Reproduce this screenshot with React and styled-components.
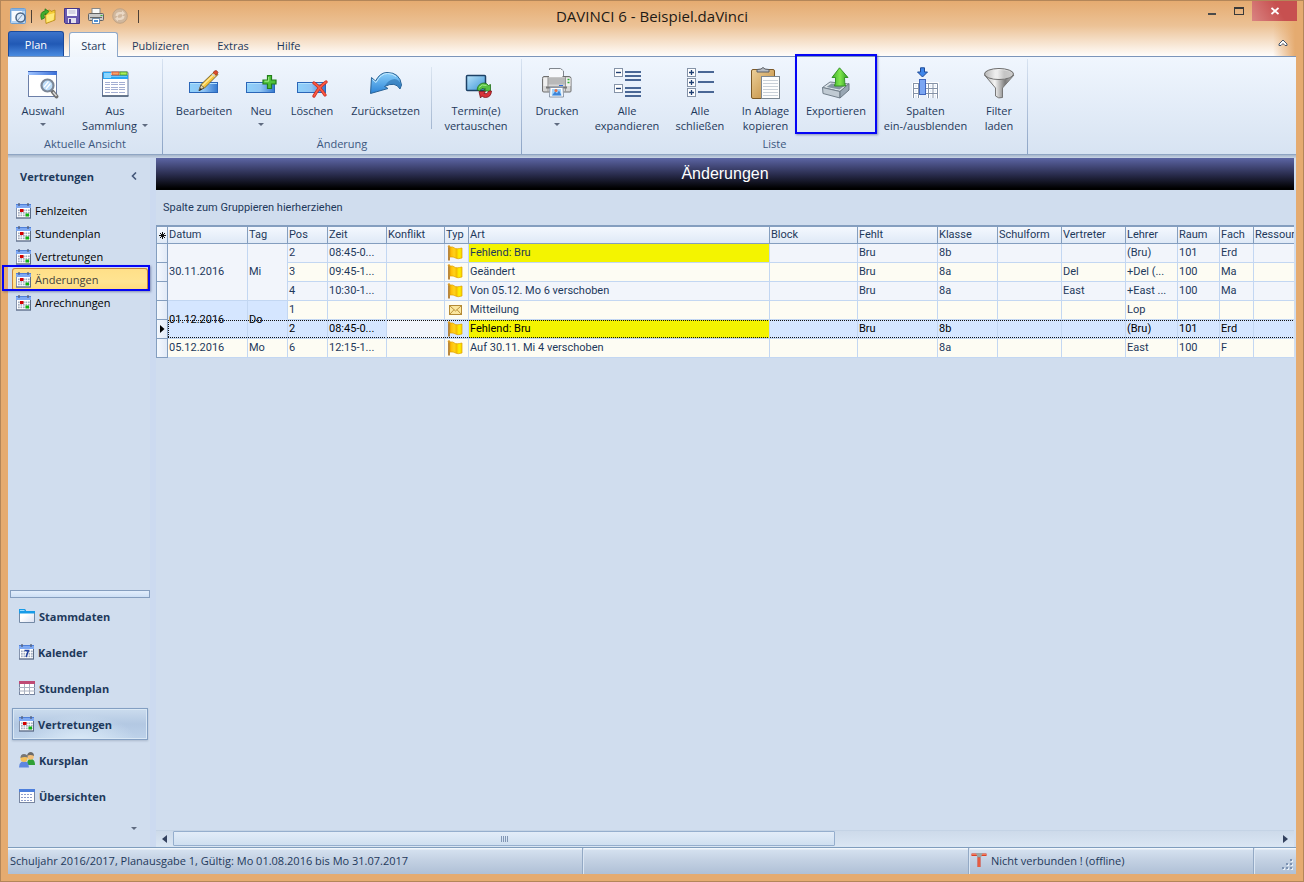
import React from "react";
import styled, { createGlobalStyle, css } from "styled-components";

const ui = `"Open Sans", "Noto Sans", sans-serif`;
const grid = `Roboto, "Noto Sans", sans-serif`;

const GlobalStyle = createGlobalStyle`
  *, *::before, *::after { box-sizing: border-box; }
  body { margin: 0; font: 11px/15px ${ui}; color: #1e395b; }
  button { font: inherit; color: inherit; border: 0; background: none; padding: 0; cursor: default; }
  svg { display: block; flex: none; }
`;

/* ---------- window frame ---------- */

const Frame = styled.div`
  min-height: 100vh;
  display: flex;
  flex-direction: column;
  background: #e5ab70;
  border: 1px solid #b38659;
  padding: 0 7px 7px;
`;

const Caption = styled.header`
  margin: 0 -7px;
  padding: 0 7px;
  background:
    linear-gradient(to right, #e5ab70 7px, rgba(229, 171, 112, 0) 30px),
    linear-gradient(to left, #e5ab70 8px, rgba(229, 171, 112, 0) 30px),
    linear-gradient(#e5ab70, #ecc296 45%, #fffdfb);
`;

const TitleBar = styled.div`
  display: grid;
  grid-template-columns: 1fr auto 1fr;
  height: 30px;
`;

const QuickAccess = styled.div`
  display: flex;
  align-items: center;
  gap: 8px;
  padding-left: 2px;
`;

const QuickButton = styled.button`
  width: 16px;
  height: 16px;
`;

const QuickBar = styled.span`
  width: 1px;
  height: 13px;
  margin-left: ${(p) => (p.$last ? "2px" : "-3px")};
  background: #4c4036;
`;

const WindowTitle = styled.h1`
  margin: 0;
  font-size: 15px;
  line-height: 30px;
  font-weight: 400;
  color: #1f1a15;
`;

const WindowButtons = styled.div`
  display: flex;
  justify-content: flex-end;
  margin-right: -1px;
`;

const WindowButton = styled.button`
  width: ${(p) => (p.$close ? 45 : 27)}px;
  height: 20px;
  display: grid;
  place-items: center;
  background: ${(p) => (p.$close ? "linear-gradient(60deg, #d98482, #c75050 60%)" : "none")};
`;

const TabStrip = styled.nav`
  display: flex;
  height: 25px;
  align-items: flex-end;
`;

const Tab = styled.button`
  height: 25px;
  padding: 4px 14px 0;
  ${(p) => p.$kind === "plan" && css`
    width: 56px;
    padding: 0;
    margin-right: 5px;
    color: #fff;
    border: 1px solid #1c4a9c;
    border-bottom: 0;
    border-radius: 3px 3px 0 0;
    background: linear-gradient(#3d74cb, #2159b5 50%, #4a8be0);
  `}
  ${(p) => p.$kind === "active" && css`
    width: 49px;
    padding: 1px 0 0;
    margin-bottom: -1px;
    position: relative;
    border: 1px solid #8ea9cb;
    border-bottom: 0;
    border-radius: 3px 3px 0 0;
    background: linear-gradient(#fbfdff, #eff5fc);
  `}
`;

const CollapseRibbon = styled.button`
  margin: 0 8px 9px auto;
`;

/* ---------- ribbon ---------- */

const Ribbon = styled.section`
  display: flex;
  min-height: 99px;
  border-top: 1px solid #7b95ba;
  border-bottom: 1px solid #8fa5c3;
  background: linear-gradient(#f0f6fe, #d7e3f2);
`;

const RibbonShade = styled.div`
  height: 3px;
  background: linear-gradient(#a6b6ca, #c8d5e6);
`;

const Group = styled.div`
  display: flex;
  flex-direction: column;
  margin-top: 2px;
  border-right: 1px solid;
  border-image: linear-gradient(#d9e4f2, #8aa2c4) 1;
`;

const GroupButtons = styled.div`
  display: flex;
  flex: 1;
  padding: ${(p) => p.$pad};
`;

const GroupLabel = styled.div`
  text-align: center;
  padding-bottom: 3px;
  color: #3b5780;
`;

const Divider = styled.span`
  width: 1px;
  height: 62px;
  margin: 8px 4px 0 0;
  background: linear-gradient(#dbe5f1, #a3b6d0);
`;

const RibbonButton = styled.button`
  position: relative;
  display: flex;
  flex-direction: column;
  align-items: center;
  width: ${(p) => p.$w}px;
  padding-top: 8px;
  white-space: nowrap;
  svg:first-child { margin-bottom: 4px; }
`;

const Caret = styled.i`
  display: inline-block;
  margin: ${(p) => (p.$inline ? "0 0 3px 5px" : "5px 0 0")};
  border: 3px solid transparent;
  border-top-color: #5f6b80;
  border-bottom: 0;
`;

const Marker = styled.span`
  position: absolute;
  inset: ${(p) => p.$inset};
  z-index: 3;
  border: 2px solid #0505f5;
  box-shadow: 1px 1px 2px rgba(60, 70, 120, 0.5);
  pointer-events: none;
`;

/* ---------- work area ---------- */

const Main = styled.main`
  flex: 1;
  display: flex;
  background: #d0ddee;
`;

const Sidebar = styled.aside`
  width: 142px;
  display: flex;
  flex-direction: column;
  flex: none;
`;

const Splitter = styled.div`
  width: 6px;
  background: #ccdaf0;
`;

const SideHead = styled.div`
  display: flex;
  align-items: center;
  justify-content: space-between;
  height: 36px;
  padding: 0 13px 0 12px;
  margin-bottom: 5px;
  font-weight: 700;
`;

const ViewList = styled.div`
  flex: 1;
  display: flex;
  flex-direction: column;
`;

const ViewItem = styled.button`
  position: relative;
  display: flex;
  align-items: center;
  gap: 4px;
  height: 23px;
  margin: 0 2px 0 4px;
  padding-left: 4px;
  color: #000;
  ${(p) => p.$active && css`
    color: #46433c;
    border-radius: 3px;
    background: linear-gradient(#ffdf87, #ffe492 60%, #ffd978);
    box-shadow: inset 0 0 0 1px #c8853c;
  `}
`;

const Grip = styled.div`
  height: 8px;
  margin: 0 0 2px 2px;
  border: 1px solid #859ebf;
  background: linear-gradient(#e3eefc, #cddff5);
`;

const NavItem = styled.button`
  display: flex;
  align-items: center;
  gap: 4px;
  height: 32px;
  margin: 0 2px 4px 4px;
  padding-left: 6px;
  border: 1px solid transparent;
  font-weight: 700;
  ${(p) => p.$active && css`
    border-color: #839fc2;
    background: radial-gradient(ellipse at 50% 110%, #dcebf8, rgba(220, 235, 248, 0) 60%),
      linear-gradient(#cbdcee, #b3c8e2 50%, #bdd2ea);
    box-shadow: inset 0 0 0 1px #dae8f5, 0 1px 2px #aab9cc;
  `}
`;

const MoreRow = styled.button`
  height: 31px;
  margin-right: 13px;
  padding-bottom: 12px;
  display: flex;
  align-items: center;
  justify-content: flex-end;
`;

const Content = styled.section`
  flex: 1;
  min-width: 0;
  display: flex;
  flex-direction: column;
  padding-right: 2px;
`;

const Banner = styled.h2`
  margin: 0;
  height: 32px;
  font: 400 16px/31px "Liberation Sans", Arial, sans-serif;
  text-align: center;
  color: #fff;
  background: linear-gradient(#5c65a4, #2b2e50 50%, #000 95%);
`;

const GroupHint = styled.div`
  padding: 0 7px;
  font-family: ${grid};
  line-height: 35px;
`;

const GridWrap = styled.div`
  flex: 1;
  overflow: hidden;
`;

const Grid = styled.table`
  width: 100%;
  table-layout: fixed;
  border-collapse: separate;
  border-spacing: 0;
  font-family: ${grid};
`;

const HeadCell = styled.th`
  height: 19px;
  padding: 0 0 0 1px;
  overflow: hidden;
  white-space: nowrap;
  text-align: left;
  font-weight: 400;
  line-height: 16px;
  border: solid #849ebf;
  border-width: 2px 1px 1px ${(p) => (p.$first ? "1px" : "0")};
  background: linear-gradient(#f4f8fe, #dfe9f6);
  &:last-child { border-right: 0; }
`;

const RowHead = styled.th`
  height: 19px;
  padding: 0 0 0 3px;
  border: solid #849ebf;
  border-width: 0 1px 1px;
  background: linear-gradient(to right, #f4f8fe, #e1eaf7);
`;

const dotsX = "repeating-linear-gradient(to right, #111 0 1px, transparent 1px 2px)";

const Cell = styled.td`
  position: relative;
  height: 19px;
  padding: 0 0 0 1px;
  overflow: hidden;
  white-space: nowrap;
  line-height: 18px;
  border: solid #c3d7f2;
  border-width: 0 1px 1px 0;
  color: ${(p) => (p.$focus ? "#000" : "inherit")};
  background: ${(p) => p.$bg};
  &:last-child { border-right: 0; }
  ${(p) => p.$focus && css`
    &::after {
      content: "";
      position: absolute;
      inset: ${p.$span ? "19px" : "0"} 0 0 0;
      background: ${dotsX} top / 100% 1px no-repeat, ${dotsX} bottom / 100% 1px no-repeat
        ${p.$start ? ", repeating-linear-gradient(#111 0 1px, transparent 1px 2px) left / 1px 100% no-repeat" : ""};
    }
  `}
`;

const ScrollBar = styled.div`
  display: flex;
  height: 17px;
  border-top: 1px solid #c4d3e5;
  background: linear-gradient(#cddaea, #dae6f3);
`;

const ScrollArrow = styled.button`
  width: 17px;
  display: grid;
  place-items: center;
`;

const ScrollTrack = styled.div`
  flex: 1;
  display: flex;
`;

const ScrollThumb = styled.div`
  width: 60%;
  display: flex;
  align-items: center;
  justify-content: center;
  gap: 1px;
  border: 1px solid #95aecd;
  border-radius: 1px;
  background: linear-gradient(#e2ecf8, #cfdff0);
  margin-bottom: 1px;
  i { width: 1px; height: 6px; background: #8296b4; }
`;

const StatusBar = styled.footer`
  display: grid;
  grid-template-columns: 575fr 386fr 285fr 42fr;
  height: 27px;
  border-top: 1px solid #7f9dbd;
  background: linear-gradient(#f2f7fc 1px, #d4e0ef 2px, #c2d0e2 50%, #afc0d6);
`;

const StatusCell = styled.div`
  display: flex;
  align-items: center;
  gap: 4px;
  padding: 0 0 2px 2px;
  white-space: nowrap;
  border-right: ${(p) => (p.$last ? "0" : "1px solid #93a9c5")};
  box-shadow: ${(p) => (p.$last ? "none" : "1px 0 #dbe6f3")};
  ${(p) => p.$last && css`align-items: flex-end; justify-content: flex-end; padding: 0 2px 3px 0;`}
`;

/* ---------- icons ---------- */

const Svg = ({ s = 32, w = s, h = s, children }) => (
  <svg width={w} height={h} viewBox={`0 0 ${w} ${h}`} aria-hidden="true">{children}</svg>
);

const HiddenDefs = styled.svg`
  position: absolute;
`;

const Defs = () => (
  <HiddenDefs width="0" height="0" aria-hidden="true">
    <defs>
      <linearGradient id="blueBar" x2="1"><stop stopColor="#8ed1fb" /><stop offset=".5" stopColor="#8fc4f4" /><stop offset="1" stopColor="#3579d0" /></linearGradient>
      <linearGradient id="blueArrow" y2="1" x2="0"><stop stopColor="#8bd0fb" /><stop offset="1" stopColor="#2c83d6" /></linearGradient>
      <linearGradient id="metal" x2="1"><stop stopColor="#b9b9b9" /><stop offset=".45" stopColor="#f7f7f7" /><stop offset="1" stopColor="#c9c9c9" /></linearGradient>
      <linearGradient id="metalDark" x2="1"><stop stopColor="#b5b5b5" /><stop offset=".35" stopColor="#f4f4f4" /><stop offset=".7" stopColor="#7c7c7c" /><stop offset="1" stopColor="#c4c4c4" /></linearGradient>
      <linearGradient id="green" x2="1"><stop stopColor="#3fae2c" /><stop offset=".5" stopColor="#7fe64d" /><stop offset="1" stopColor="#2f9a22" /></linearGradient>
      <linearGradient id="board" x2="1" y2="1"><stop stopColor="#ecd09a" /><stop offset="1" stopColor="#bf8635" /></linearGradient>
      <linearGradient id="flag" x2="1"><stop stopColor="#ffb400" /><stop offset=".35" stopColor="#ffd21a" /><stop offset=".55" stopColor="#f5bd00" /><stop offset=".75" stopColor="#fff200" /><stop offset="1" stopColor="#f6cf00" /></linearGradient>
      <linearGradient id="screen" x2="1" y2="1"><stop stopColor="#b9e3fa" /><stop offset="1" stopColor="#3a93d6" /></linearGradient>
      <linearGradient id="paper" x2="1" y2="1"><stop offset=".4" stopColor="#fff" /><stop offset="1" stopColor="#d9e0f2" /></linearGradient>
      <linearGradient id="head" x2="1"><stop stopColor="#9fc4ff" /><stop offset="1" stopColor="#3a6fd8" /></linearGradient>
    </defs>
  </HiddenDefs>
);

const WindowSearch = () => (
  <Svg>
    <rect x="1.500" y="4.500" width="28" height="25" fill="#fff" stroke="#6c7fa8" />
    <rect x="1" y="4" width="29" height="4" fill="url(#head)" />
    <rect x="1" y="4" width="29" height="1" fill="#3a62b8" />
    <path d="M25.500 24.500l4 5" stroke="#6f6f6f" strokeWidth="3.800" strokeLinecap="round" />
    <path d="M26 25l3.500 4" stroke="#ddd" strokeWidth="1.300" />
    <circle cx="20.500" cy="18.500" r="6" fill="#bcdcf8" stroke="#7c8797" strokeWidth="2.200" />
    <path d="M17 20l4.500-5.500M19 22l4.500-5.500" stroke="#fff" strokeWidth="1.200" />
  </Svg>
);

const TabbedList = () => (
  <Svg>
    <path d="M3.500 12V6q0-1 1-1H28q1 0 1 1v23H3.500z" fill="#fff" stroke="#65789c" />
    <path d="M4 12V5h8v3h17v4z" fill="#27a4f5" />
    <rect x="5" y="6" width="7" height="5" fill="#8cd6ff" />
    <path d="M12 9.500h16" stroke="#6cc6fb" />
    <rect x="13" y="5" width="7" height="3" fill="#f3a36a" stroke="#d94a2a" strokeWidth=".8" />
    <rect x="21" y="5" width="7" height="3" fill="#a9ef5e" stroke="#4d9a1c" strokeWidth=".8" />
    {[15, 17, 20, 22, 25].map((y) => <path key={y} d={`M6 ${y}.5h5m1 0h7m1 0h6`} stroke="#a3aed2" />)}
    <path d="M3 29h26.500" stroke="#4e6177" strokeWidth="1.500" />
  </Svg>
);

const Bar = () => (
  <>
    <rect x="1.500" y="15.500" width="28" height="10" fill="url(#blueBar)" stroke="#2b66b8" />
    <path d="M2 16.500h27" stroke="#b4e1fd" />
  </>
);

const EditIcon = () => (
  <Svg>
    <Bar />
    <path d="M11 23.500l2-6L26.500 4.500l3.500 3L16.500 21z" fill="#f4c63c" stroke="#6b5a2a" strokeWidth=".9" />
    <path d="M14 19L27 6.500" stroke="#ffe99a" strokeWidth="1.300" />
    <path d="M25 5.500l2-1.800q2-.8 3 1.800l-1.800 2.800z" fill="#e24a2c" stroke="#8e3222" strokeWidth=".7" />
    <path d="M24 7l3 2.500" stroke="#ccd2d8" strokeWidth="1.500" />
    <path d="M11 23.500l2-5.500 3 2.500z" fill="#e9d6a8" stroke="#4a4a4a" strokeWidth=".7" />
    <path d="M11 24l1.500-3 1.500 1.500z" fill="#222" />
  </Svg>
);

const NewIcon = () => (
  <Svg>
    <Bar />
    <path d="M22.500 8.500h4v4.500h4.500v4h-4.500v4.500h-4V17H18v-4h4.500z" fill="#4fc13a" stroke="#237f1b" strokeWidth="1.200" />
    <path d="M23.700 10v4.200H19.500" stroke="#a5ee8c" fill="none" />
  </Svg>
);

const DeleteIcon = () => (
  <Svg>
    <Bar />
    <path d="M18 16q6 4 11 12M30 15q-7 5-12 14" stroke="#c92a1d" strokeWidth="3.200" fill="none" strokeLinecap="round" />
    <path d="M18 16q6 4 11 12M30 15q-7 5-12 14" stroke="#fa5b44" strokeWidth="1.600" fill="none" strokeLinecap="round" />
  </Svg>
);

const UndoIcon = () => (
  <Svg>
    <path d="M.5 26.500L1.500 10.500l4 3.500Q10 5.500 17 5.500q13 0 14.500 12.500l-1.500 4Q25.500 14 14.500 19.500l3.500 2z" fill="url(#blueArrow)" stroke="#2a6396" />
    <path d="M30 21.500Q25.500 14 14.500 19.500q3.500-7 10-7.500 5 .5 6.500 6z" fill="#2769a8" opacity=".55" />
    <path d="M2.500 12.500l3.500 3Q11 6.500 17.500 6.500q5 0 8.500 3" stroke="#c8ecff" fill="none" />
  </Svg>
);

const SwapIcon = () => (
  <Svg>
    <rect x="6.500" y="8.500" width="19" height="15" rx="1" fill="url(#screen)" stroke="#1d4166" strokeWidth="1.500" />
    <path d="M17 22.500q1.500-6.500 7-6.500 3 0 4.500 2.500l2-1v7l-7-1 2-1.500q-4-2-6 2z" fill="#55c040" stroke="#1f6e18" strokeWidth=".8" />
    <path d="M31.500 24q-.5 6.500-6 6.500-2 0-3.500-1.500L20.500 31 19 24.500l6.500 0-1.500 2q3 1.500 5-2.500z" fill="#d8333a" stroke="#7c1216" strokeWidth=".8" />
    <path d="M19 20.500q3-4 7.500-2" stroke="#a4ea8c" fill="none" />
  </Svg>
);

const PrinterIcon = () => (
  <Svg>
    <path d="M8.500 13V1.500h11l3 2.500v9z" fill="#f5f7fa" stroke="#80868e" />
    <path d="M3 9.500h25q2 0 2 2V24q0 1-1 1H3q-1.500 0-1.500-1V11.500q0-2 1.500-2z" fill="#d6d6d6" stroke="#6f6f6f" />
    <path d="M8 10V3h13.500v7z" fill="#f7f9fc" />
    <path d="M7 10.500h17v7H7z" fill="#b9b9b9" /><path d="M2.500 11h4v8h-4zM24.500 11h5v8h-5z" fill="#f0f0f0" />
    <path d="M7 10v15M24.500 10v15" stroke="#999" />
    <path d="M26.500 12.500h2m-2 3h2" stroke="#2fae30" strokeWidth="1.500" />
    <path d="M18 18.500h4" stroke="#2b6de0" />
    <rect x="5" y="19.500" width="21" height="2" fill="#777" />
    <path d="M9 20.500h13l.5 9.500h-14z" fill="#fff" stroke="#8a96a8" />
    <path d="M11 22h9l.5 6.500h-10z" fill="#9fd2fb" /><path d="M11 28.500l3-4 2 2 2-3 2.500 5z" fill="#3d84d8" /><circle cx="15" cy="23.500" r="1.500" fill="#e87045" />
  </Svg>
);

const ExpandIcon = () => (
  <Svg>
    {[1.5, 17.5].map((y) => (
      <g key={y}>
        <rect x="3.500" y={y} width="8" height="8" fill="#fff" stroke="#8593a8" />
        <path d={`M5 ${y + 4}h5`} stroke="#1f3f72" strokeWidth="1.400" />
        <path d={`M14 ${y + 3.5}h16M14 ${y + 7.5}h16M14 ${y + 11.5}h16`} stroke="#4a6795" strokeWidth="2" />
      </g>
    ))}
  </Svg>
);

const CollapseIcon = () => (
  <Svg>
    {[1.5, 11.5, 21.5].map((y) => (
      <g key={y}>
        <rect x="3.500" y={y} width="8" height="8" fill="#fff" stroke="#8593a8" />
        <path d={`M5 ${y + 4}h5M7.500 ${y + 1.5}v5`} stroke="#1f3f72" strokeWidth="1.300" />
        <path d={`M14 ${y + 3.5}h16`} stroke="#4a6795" strokeWidth="2" />
      </g>
    ))}
  </Svg>
);

const ClipboardIcon = () => (
  <Svg>
    <rect x="1.500" y="2.500" width="23" height="29" rx="1.500" fill="url(#board)" stroke="#7d5a28" />
    <path d="M7 5V2.500l4-.5q2-3 4 0l4 .5V5z" fill="#b7bcc2" stroke="#5a5f66" />
    <rect x="11.500" y="9.500" width="18" height="22" fill="#fdfdfd" stroke="#7c8792" />
    {[13, 16, 19, 22, 25, 28].map((y) => <path key={y} d={`M13 ${y}.5h15`} stroke="#c9d0d8" />)}
  </Svg>
);

const ExportIcon = () => (
  <Svg>
    <path d="M2.500 20.500L10 15l19 2-9 7.500z" fill="#dfe6ec" stroke="#73808c" />
    <path d="M6.500 20l5-3.500 14 1.500-6 4.500z" fill="#8595a3" />
    <path d="M2.500 20.500L20 24.500v6.500L3 26.500z" fill="#c0cad3" stroke="#73808c" />
    <path d="M20 24.500l9-8v6.500l-9 8z" fill="#98a6b3" stroke="#6a7782" />
    <path d="M19.500 .8L28 10.500h-3.500q0 6 1 8.500h-11q1.500-3 1-8.500H12z" fill="url(#green)" stroke="#2b8a1e" strokeWidth=".9" />
  </Svg>
);

const ColumnsIcon = () => (
  <Svg>
    <path d="M3.500 16.500h24v15M3.500 16v15M3.500 21.500h24M3.500 26.500h24M8.500 16v15M18.500 16v15M23 16v15" fill="none" stroke="#fff" strokeWidth="3" />
    <path d="M3.500 16.500h24v15M3.500 16v15M3.500 21.500h24M3.500 26.500h24M8.500 16v15M18.500 16v15M23 16v15" fill="none" stroke="#8593a8" />
    <rect x="9.500" y="12.500" width="6" height="15" fill="#7ba6f2" stroke="#3f66bd" />
    <path d="M10.500 .8h4V5h3L12.500 10 7.500 5h3z" fill="#3f86ea" stroke="#1f4b98" />
  </Svg>
);

const FunnelIcon = () => (
  <Svg>
    <path d="M1.500 8l11 13v8q3 3 7 1.500V21L31 8z" fill="url(#metalDark)" stroke="#777" />
    <ellipse cx="16" cy="7" rx="14.500" ry="5.500" fill="url(#metal)" stroke="#6c6c6c" />
    <ellipse cx="16" cy="7.500" rx="13" ry="4.500" fill="url(#metalDark)" opacity=".3" />
  </Svg>
);

const LogoIcon = () => (
  <Svg s={16}>
    <rect x=".5" y=".5" width="15" height="15" rx="1" fill="#b8d5f2" stroke="#6e9fd2" />
    <rect x="2" y="3" width="10" height="10" fill="#f8fbff" /><path d="M1 2h14" stroke="#5b93d6" />
    <circle cx="10.500" cy="9.500" r="4.500" fill="#dbeafa" stroke="#4a6484" strokeWidth="1.500" />
    <path d="M8 12l4.500-5.500" stroke="#7d97b5" />
  </Svg>
);

const OpenIcon = () => (
  <Svg s={16}>
    <path d="M5 3l5-1 1 1.500 4-1.500V12L6 15.500z" fill="#f5cb35" stroke="#b38a15" strokeWidth=".8" />
    <path d="M6.500 7l8-2-1 7L6.500 14.500z" fill="#ffe878" />
    <path d="M1.500 11.500Q-1 4 5 3V.8L9 3.500 5.500 7V5.500Q3 6 4.500 10z" fill="#3fae2e" stroke="#1d7414" strokeWidth=".7" />
  </Svg>
);

const SaveIcon = () => (
  <Svg s={16}>
    <path d="M.5.5h15v15h-14l-1-1z" fill="#6a5bb0" stroke="#43378a" />
    <rect x="3" y="1" width="10" height="7" fill="#f4f4fa" /><path d="M4.500 3h7m-7 2h7" stroke="#b6b4cc" />
    <rect x="4" y="10" width="8" height="5" fill="#e2e0ee" /><rect x="5" y="11" width="2" height="4" fill="#4c3f96" />
  </Svg>
);

const MiniPrinter = () => (
  <Svg s={16}>
    <rect x="4" y=".5" width="8" height="6" fill="#fafafa" stroke="#888" />
    <rect x=".5" y="5.500" width="15" height="7" rx="1" fill="#c9c9c9" stroke="#636363" />
    <path d="M2 9.500h12" stroke="#686868" /><path d="M12.500 7.500h2" stroke="#3b3" />
    <rect x="4.500" y="10.500" width="7" height="5" fill="#fff" stroke="#7590ae" /><path d="M6 13h4" stroke="#4a90d8" strokeWidth="2" />
  </Svg>
);

const RefreshIcon = () => (
  <Svg s={16}>
    <circle cx="8" cy="8" r="7.300" fill="#d0b79d" stroke="#c0a385" />
    <path d="M3.500 8q0-4 4.500-4h2V2.500l3 2.800-3 2.700V6.300H8q-2 0-2 1.700zM12.500 8q0 4-4.500 4H6v1.500L3 10.700 6 8v1.700h2q2 0 2-1.700z" fill="#ead8c5" />
  </Svg>
);

const CalendarIcon = ({ seven }) => (
  <Svg w={15} h={16}>
    <rect x=".5" y="1.500" width="14" height="13.500" fill="#fff" stroke="#8694ad" />
    <rect x="0" y="1" width="15" height="4" fill="#7ea9f3" />
    <path d="M0 1.500h15" stroke="#4f7fd8" />
    <path d="M3 0v3M12 0v3" stroke="#55607a" strokeWidth="1.300" />
    {[6.5, 9, 11.5].map((y) => [2, 4.5, 7, 9.5, 12].map((x) => <rect key={`${x}${y}`} x={x} y={y} width="1.700" height="1.700" fill="#a4aec0" />))}
    {seven
      ? <path d="M5.500 6.500h4L7 13" fill="none" stroke="#1f3f9c" strokeWidth="1.500" />
      : <><rect x="4" y="6" width="3.500" height="3" fill="#d40000" /><rect x="9.500" y="10.500" width="3.500" height="3" fill="#12b312" /></>}
    <path d="M0 15h15M14.500 5v10" stroke="#5b6b85" />
  </Svg>
);

const FolderIcon = () => (
  <Svg s={16}>
    <path d="M.5 14.500V1.500H6l1 2h8.500v11z" fill="url(#paper)" stroke="#7389a5" />
    <path d="M0 5.500V1h6l1 2h9v2.500z" fill="#179be8" /><path d="M1 2.500h4.500" stroke="#9bdcff" />
  </Svg>
);

const PlanIcon = ({ color, dots }) => (
  <Svg s={16}>
    <rect x=".5" y="1.500" width="15" height="13" fill="#fff" stroke="#7785a0" />
    <rect x="0" y="1" width="16" height="3" fill={color} />
    {dots
      ? [6.5, 9.5, 12.5].map((y) => <path key={y} d={`M2 ${y}h2m1 0h2m1 0h2m1 0h2`} stroke="#8f9ecb" />)
      : <path d="M0 7.500h16M0 11h16M5.500 4v11M10.500 4v11" stroke="#aab1c0" />}
  </Svg>
);

const PeopleIcon = () => (
  <Svg s={16}>
    <path d="M8 13q0-6 3.500-6Q16 7 16 13z" fill="#2fa036" /><circle cx="11.500" cy="4.500" r="3.300" fill="#f3c07c" />
    <path d="M8 4q.5-4 4-4 3 .5 3 4-3.500-2-7 0z" fill="#6b6b6b" />
    <path d="M0 15.500q0-6 5-6.500 5 .5 5 6.500z" fill="#5f87e0" /><circle cx="5" cy="6.500" r="3.500" fill="#f5c05a" />
    <path d="M1.500 6q0-4 3.500-4t4 3.500q-4-1-7.500.5z" fill="#777" />
  </Svg>
);

const FlagIcon = () => (
  <Svg w={18} h={16}>
    <path d="M3 1v14.500" stroke="#a86a14" strokeWidth="1.600" /><circle cx="3" cy="1.500" r="1.200" fill="#d99b2a" />
    <path d="M4 2q3-.5 4.500 1t7.500 0v10q-4.500 1.500-6.500 0T4 12z" fill="url(#flag)" stroke="#dfa100" strokeWidth=".7" />
  </Svg>
);

const MailIcon = () => (
  <Svg w={18} h={16}>
    <rect x="3.500" y="3.500" width="12" height="9" fill="#fbe7a0" stroke="#b48a34" />
    <path d="M4 4l5.500 5L15 4M4 12l4-4.300M15 12l-4-4.300" fill="none" stroke="#b48a34" strokeWidth=".9" />
  </Svg>
);

const OfflineIcon = () => (
  <Svg s={16}>
    <path d="M.5 1.500h15v2.500h-15z" fill="#d8311a" /><path d="M6.500 4h3v11h-3z" fill="#d8311a" />
    <path d="M1 2.700h14M8 6v9" stroke="#f58a68" /><path d="M5 1h6.500L10 5.500H6.500z" fill="#9aa6a6" />
  </Svg>
);

/* ---------- data ---------- */

const ribbonGroups = [
  { label: "Aktuelle Ansicht", pad: "0 10px 0 0", buttons: [
    { lines: ["Auswahl"], caret: true, icon: WindowSearch, w: 70 },
    { lines: ["Aus", "Sammlung"], caretInline: true, icon: TabbedList, w: 74 },
  ] },
  { label: "Änderung", pad: "0 5px 0 7px", buttons: [
    { lines: ["Bearbeiten"], icon: EditIcon, w: 68 },
    { lines: ["Neu"], caret: true, icon: NewIcon, w: 46 },
    { lines: ["Löschen"], icon: DeleteIcon, w: 56 },
    { lines: ["Zurücksetzen"], icon: UndoIcon, w: 91 },
    { divider: true },
    { lines: ["Termin(e)", "vertauschen"], icon: SwapIcon, w: 80 },
  ] },
  { label: "Liste", pad: "0 7px 0 6px", buttons: [
    { lines: ["Drucken"], caret: true, icon: PrinterIcon, w: 58 },
    { lines: ["Alle", "expandieren"], icon: ExpandIcon, w: 82 },
    { lines: ["Alle", "schließen"], icon: CollapseIcon, w: 64 },
    { lines: ["In Ablage", "kopieren"], icon: ClipboardIcon, w: 67 },
    { lines: ["Exportieren"], icon: ExportIcon, w: 74, marked: true },
    { lines: ["Spalten", "ein-/ausblenden"], icon: ColumnsIcon, w: 105 },
    { lines: ["Filter", "laden"], icon: FunnelIcon, w: 42 },
  ] },
];

const views = ["Fehlzeiten", "Stundenplan", "Vertretungen", "Änderungen", "Anrechnungen"];

const modules = [
  ["Stammdaten", <FolderIcon />],
  ["Kalender", <CalendarIcon seven />],
  ["Stundenplan", <PlanIcon color="#bf4a74" />],
  ["Vertretungen", <CalendarIcon />],
  ["Kursplan", <PeopleIcon />],
  ["Übersichten", <PlanIcon color="#4d7fdc" dots />],
];

const columns = [
  ["Datum", 80], ["Tag", 40], ["Pos", 40], ["Zeit", 59], ["Konflikt", 58], ["Typ", 24], ["Art", 301],
  ["Block", 88], ["Fehlt", 80], ["Klasse", 60], ["Schulform", 64], ["Vertreter", 64], ["Lehrer", 52],
  ["Raum", 42], ["Fach", 34], ["Ressour", null],
];

const rows = [
  { date: ["30.11.2016", "Mi", 3], cells: ["2", "08:45-0...", "", "flag", "Fehlend: Bru", "", "Bru", "8b", "", "", "(Bru)", "101", "Erd", ""], missing: true },
  { cells: ["3", "09:45-1...", "", "flag", "Geändert", "", "Bru", "8a", "", "Del", "+Del (...", "100", "Ma", ""] },
  { cells: ["4", "10:30-1...", "", "flag", "Von 05.12. Mo 6 verschoben", "", "Bru", "8a", "", "East", "+East ...", "100", "Ma", ""] },
  { date: ["01.12.2016", "Do", 2], dateFocus: true, cells: ["1", "", "", "mail", "Mitteilung", "", "", "", "", "", "Lop", "", "", ""] },
  { focus: true, cells: ["2", "08:45-0...", "", "flag", "Fehlend: Bru", "", "Bru", "8b", "", "", "(Bru)", "101", "Erd", ""], missing: true },
  { date: ["05.12.2016", "Mo", 1], cells: ["6", "12:15-1...", "", "flag", "Auf 30.11. Mi 4 verschoben", "", "", "8a", "", "", "East", "100", "F", ""] },
];

const SELECTED = "#d5e6ff";
const stripe = (i) => (i % 2 ? "#fdfcf3" : "#f2f5fb");

/* ---------- parts ---------- */

function RibbonItem({ item }) {
  if (item.divider) return <Divider />;
  const Icon = item.icon;
  return (
    <RibbonButton $w={item.w}>
      <Icon />
      {item.lines.map((line, i) => (
        <span key={line}>
          {line}
          {item.caretInline && i === 1 && <Caret $inline />}
        </span>
      ))}
      {item.caret && <Caret />}
      {item.marked && <Marker $inset="-5px -4px 2px -4px" />}
    </RibbonButton>
  );
}

function ChangeRow({ row, index }) {
  const bg = row.focus ? SELECTED : stripe(index);
  return (
    <tr>
      <RowHead scope="row" aria-label={row.focus ? "Aktuelle Zeile" : undefined}>
        {row.focus && <svg width="5" height="8" viewBox="0 0 5 8"><path d="M0 0l4.500 4L0 8z" fill="#000" /></svg>}
      </RowHead>
      {row.date && row.date.slice(0, 2).map((text, i) => (
        <Cell key={text} rowSpan={row.date[2]} $bg={row.dateFocus ? SELECTED : bg} $focus={row.dateFocus} $span $start={i === 0}>
          {text}
        </Cell>
      ))}
      {row.cells.map((text, i) => (
        <Cell key={i} $focus={row.focus} $bg={i === 4 && row.missing ? "#f4f400" : i === 2 && row.focus ? "#f2f5fb" : bg}>
          {text === "flag" ? <FlagIcon /> : text === "mail" ? <MailIcon /> : text}
        </Cell>
      ))}
    </tr>
  );
}

export default function App() {
  return (
    <Frame>
      <GlobalStyle />
      <Defs />
      <Caption>
        <TitleBar>
          <QuickAccess>
            <LogoIcon />
            <QuickBar />
            <QuickButton aria-label="Öffnen"><OpenIcon /></QuickButton>
            <QuickButton aria-label="Speichern"><SaveIcon /></QuickButton>
            <QuickButton aria-label="Drucken"><MiniPrinter /></QuickButton>
            <QuickButton aria-label="Aktualisieren"><RefreshIcon /></QuickButton>
            <QuickBar $last />
          </QuickAccess>
          <WindowTitle>DAVINCI 6 - Beispiel.daVinci</WindowTitle>
          <WindowButtons>
            <WindowButton aria-label="Minimieren"><Svg w={10} h={10}><rect x="1" y="7" width="8" height="2" fill="#4a4a4a" /></Svg></WindowButton>
            <WindowButton aria-label="Maximieren"><Svg w={10} h={8}><path d="M0 0h10v8H0zM1 2v5h8V2z" fill="#3a3a3a" fillRule="evenodd" /></Svg></WindowButton>
            <WindowButton $close aria-label="Schließen"><Svg w={8} h={8}><path d="M.5 1l7 6M7.500 1l-7 6" stroke="#fff" strokeWidth="1.800" /></Svg></WindowButton>
          </WindowButtons>
        </TitleBar>
        <TabStrip>
          <Tab $kind="plan">Plan</Tab>
          <Tab $kind="active">Start</Tab>
          <Tab>Publizieren</Tab>
          <Tab>Extras</Tab>
          <Tab>Hilfe</Tab>
          <CollapseRibbon aria-label="Menüband minimieren">
            <Svg w={10} h={8}><path d="M1 5L5 1l4 4v1.500H7L5 4.500 3 6.500H1z" fill="#fff" stroke="#44546a" /></Svg>
          </CollapseRibbon>
        </TabStrip>
      </Caption>

      <Ribbon>
        {ribbonGroups.map((group) => (
          <Group key={group.label}>
            <GroupButtons $pad={group.pad}>
              {group.buttons.map((item, i) => <RibbonItem key={i} item={item} />)}
            </GroupButtons>
            <GroupLabel>{group.label}</GroupLabel>
          </Group>
        ))}
      </Ribbon>
      <RibbonShade />

      <Main>
        <Sidebar>
          <SideHead>
            <span>Vertretungen</span>
            <Svg w={6} h={8}><path d="M5 .5L1.500 4 5 7.500" fill="none" stroke="#44587a" strokeWidth="1.600" /></Svg>
          </SideHead>
          <ViewList>
            {views.map((name) => (
              <ViewItem key={name} $active={name === "Änderungen"}>
                <CalendarIcon />
                {name}
                {name === "Änderungen" && <Marker $inset="-3px -2px 0 -10px" />}
              </ViewItem>
            ))}
          </ViewList>
          <Grip />
          {modules.map(([name, icon]) => (
            <NavItem key={name} $active={name === "Vertretungen"}>{icon}{name}</NavItem>
          ))}
          <MoreRow aria-label="Weitere"><Caret /></MoreRow>
        </Sidebar>
        <Splitter />
        <Content>
          <Banner>Änderungen</Banner>
          <GroupHint>Spalte zum Gruppieren hierherziehen</GroupHint>
          <GridWrap>
            <Grid>
              <colgroup>
                <col width="12" />
                {columns.map(([name, width]) => <col key={name} width={width ?? undefined} />)}
              </colgroup>
              <thead>
                <tr>
                  <HeadCell $first aria-label="Spaltenauswahl">
                    <Svg w={9} h={9}><path d="M4.500 1v7M1 4.500h7M2 2l5 5M7 2L2 7" stroke="#111" strokeWidth="1" /></Svg>
                  </HeadCell>
                  {columns.map(([name]) => <HeadCell key={name} scope="col">{name}</HeadCell>)}
                </tr>
              </thead>
              <tbody>
                {rows.map((row, i) => <ChangeRow key={i} row={row} index={i} />)}
              </tbody>
            </Grid>
          </GridWrap>
          <ScrollBar>
            <ScrollArrow aria-label="Nach links"><Svg w={5} h={8}><path d="M5 0v8L0 4z" fill="#33415e" /></Svg></ScrollArrow>
            <ScrollTrack><ScrollThumb><i /><i /><i /><i /></ScrollThumb></ScrollTrack>
            <ScrollArrow aria-label="Nach rechts"><Svg w={5} h={8}><path d="M0 0v8l5-4z" fill="#33415e" /></Svg></ScrollArrow>
          </ScrollBar>
        </Content>
      </Main>

      <StatusBar>
        <StatusCell>Schuljahr 2016/2017, Planausgabe 1, Gültig: Mo 01.08.2016 bis Mo 31.07.2017</StatusCell>
        <StatusCell />
        <StatusCell><OfflineIcon />Nicht verbunden ! (offline)</StatusCell>
        <StatusCell $last>
          <Svg w={12} h={12}>
            {[[8, 0], [4, 4], [8, 4], [0, 8], [4, 8], [8, 8]].map(([x, y]) => (
              <g key={`${x}-${y}`}><rect x={x + 1} y={y + 1} width="2" height="2" fill="#e8f0f8" /><rect x={x} y={y} width="2" height="2" fill="#7d93b3" /></g>
            ))}
          </Svg>
        </StatusCell>
      </StatusBar>
    </Frame>
  );
}
